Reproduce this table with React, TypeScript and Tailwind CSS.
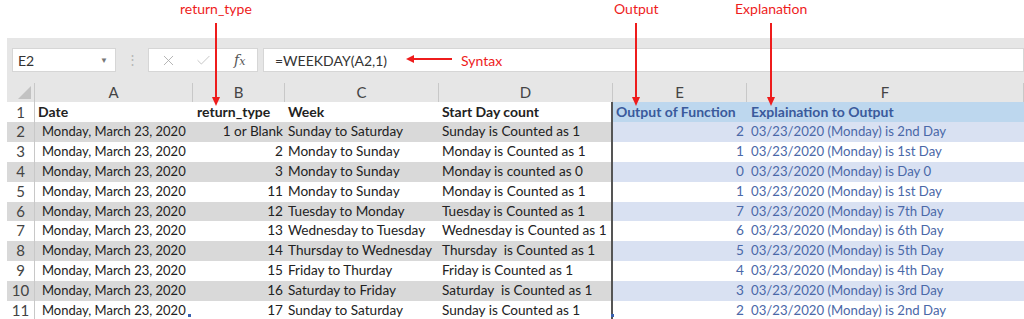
import { X, Check } from "lucide-react";

type Row = {
  n: number;
  b: string;
  c: string;
  d: string;
  e: string;
  f: string;
};

const rows: Row[] = [
  { n: 2, b: "1 or Blank", c: "Sunday to Saturday", d: "Sunday is Counted as 1", e: "2", f: "03/23/2020 (Monday) is 2nd Day" },
  { n: 3, b: "2", c: "Monday to Sunday", d: "Monday is Counted as 1", e: "1", f: "03/23/2020 (Monday) is 1st Day" },
  { n: 4, b: "3", c: "Monday to Sunday", d: "Monday is counted as 0", e: "0", f: "03/23/2020 (Monday) is Day 0" },
  { n: 5, b: "11", c: "Monday to Sunday", d: "Monday is Counted as 1", e: "1", f: "03/23/2020 (Monday) is 1st Day" },
  { n: 6, b: "12", c: "Tuesday to Monday", d: "Tuesday is Counted as 1", e: "7", f: "03/23/2020 (Monday) is 7th Day" },
  { n: 7, b: "13", c: "Wednesday to Tuesday", d: "Wednesday is Counted as 1", e: "6", f: "03/23/2020 (Monday) is 6th Day" },
  { n: 8, b: "14", c: "Thursday to Wednesday", d: "Thursday  is Counted as 1", e: "5", f: "03/23/2020 (Monday) is 5th Day" },
  { n: 9, b: "15", c: "Friday to Thurday", d: "Friday is Counted as 1", e: "4", f: "03/23/2020 (Monday) is 4th Day" },
  { n: 10, b: "16", c: "Saturday to Friday", d: "Saturday  is Counted as 1", e: "3", f: "03/23/2020 (Monday) is 3rd Day" },
  { n: 11, b: "17", c: "Sunday to Saturday", d: "Sunday is Counted as 1", e: "2", f: "03/23/2020 (Monday) is 2nd Day" },
];

const cols = "grid grid-cols-[28px_158px_92px_154px_174px_134px_1fr]";

function DownArrow({ x }: { x: number }) {
  return (
    <svg
      className="absolute top-[23px]"
      style={{ left: x - 5 }}
      width="10"
      height="84"
      viewBox="0 0 10 84"
    >
      <line x1="5" y1="0" x2="5" y2="76" stroke="#ee1c1c" strokeWidth="2" />
      <polygon points="1,74 9,74 5,83" fill="#ee1c1c" />
    </svg>
  );
}

export default function App() {
  return (
    <div className="relative w-[1024px] h-[319px] overflow-hidden bg-white font-['Lato',sans-serif] text-[14px] text-[#222]">
      <div className="h-[38px]" />

      {/* ribbon / formula bar */}
      <div className="ml-[7px] bg-[#e6e6e6] pt-[10px]">
        <div className="flex items-center h-[24px]">
          <div className="ml-[5px] w-[104px] h-[24px] bg-white border border-[#d6d6d6] flex items-center justify-between pl-[5px] pr-[7px] text-[#333]">
            <span>E2</span>
            <span className="text-[8px] text-[#777]">▼</span>
          </div>
          <div className="w-[32px] flex justify-center text-[#b5b5b5] text-[13px]">⋮</div>
          <div className="w-[110px] h-[24px] bg-white border border-[#d6d6d6] flex items-center">
            <X size={17} strokeWidth={1.2} className="ml-[11px] text-[#a9a9a9]" />
            <Check size={17} strokeWidth={1.2} className="ml-[18px] text-[#bdbdbd]" />
            <span className="ml-[22px] font-['DejaVu_Serif',serif] italic text-[#555] text-[14px]">
              f<span className="text-[11px]">x</span>
            </span>
          </div>
          <div className="ml-[5px] flex-1 h-[24px] bg-white border border-[#d6d6d6] flex items-center pl-[11px] text-[#333]">
            =WEEKDAY(A2,1)
          </div>
        </div>
        <div className="h-[11px]" />
        {/* column letters */}
        <div className={`${cols} h-[19px] text-[#444] text-[15px] leading-[19px]`}>
          <div className="relative border-r border-[#c8c8c8]">
            <svg className="absolute right-[3px] bottom-[3px]" width="13" height="13" viewBox="0 0 13 13">
              <polygon points="13,0 13,13 0,13" fill="#c2c2c2" />
            </svg>
          </div>
          {["A", "B", "C", "D", "E", "F"].map((l) => (
            <div key={l} className="text-center border-r border-[#c8c8c8]">
              {l}
            </div>
          ))}
        </div>
      </div>

      {/* sheet */}
      <div className="ml-[7px]">
        <div className={`${cols} h-[20px] leading-[20px] font-bold`}>
          <div className="text-center font-normal text-[15px] text-[#444] border-r border-[#c8c8c8]">1</div>
          <div className="pl-[3px] border-b-2 border-[#333]">Date</div>
          <div className="pl-[4px] border-b-2 border-[#333]">return_type</div>
          <div className="pl-[3px] border-b-2 border-[#333]">Week</div>
          <div className="pl-[3px] border-b-2 border-[#333] border-r-2 border-r-[#555]">Start Day count</div>
          <div className="pl-[3px] bg-[#bdd7ee] text-[#3a5a9c] border-b border-[#a9c6e4]">Output of Function</div>
          <div className="pl-[4px] bg-[#bdd7ee] text-[#3a5a9c] border-b border-[#a9c6e4]">Explaination to Output</div>
        </div>
        {rows.map((r) => {
          const band = r.n % 2 === 0;
          return (
            <div key={r.n} className={`${cols} h-[19.9px] leading-[19.9px] whitespace-pre text-[13.6px]`}>
              <div className={`text-center text-[15px] text-[#444] border-r border-[#c8c8c8] ${band ? "bg-[#d9d9d9]" : ""}`}>
                {r.n}
              </div>
              <div className={`pl-[7px] text-[13px] ${band ? "bg-[#d9d9d9]" : ""}`}>Monday, March 23, 2020</div>
              <div className={`pr-[2px] text-right ${band ? "bg-[#d9d9d9]" : ""}`}>{r.b}</div>
              <div className={`pl-[3px] ${band ? "bg-[#d9d9d9]" : ""}`}>{r.c}</div>
              <div className={`pl-[3px] border-r-2 border-[#555] ${band ? "bg-[#d9d9d9]" : ""}`}>{r.d}</div>
              <div className={`pr-[3px] text-right text-[#4a68a8] ${band ? "bg-[#d9e1f2]" : ""}`}>{r.e}</div>
              <div className={`pl-[4px] text-[13.2px] text-[#4a68a8] ${band ? "bg-[#d9e1f2]" : ""}`}>{r.f}</div>
            </div>
          );
        })}
      </div>

      {/* fill handle marks */}
      <div className="absolute left-[188px] top-[314px] w-[3px] h-[3px] bg-[#3a62b0]" />
      <div className="absolute left-[611px] top-[314px] w-[3px] h-[3px] bg-[#3a62b0]" />

      {/* red annotations */}
      <div className="absolute left-[180px] top-[-2px] text-[#ee1c1c] text-[14px]">return_type</div>
      <div className="absolute left-[614px] top-[-2px] text-[#ee1c1c] text-[14px]">Output</div>
      <div className="absolute left-[735px] top-[-2px] text-[#ee1c1c] text-[14px]">Explanation</div>
      <div className="absolute left-[461px] top-[50px] text-[#ee1c1c] text-[14px]">Syntax</div>
      <DownArrow x={216} />
      <DownArrow x={636} />
      <DownArrow x={771} />
      <svg className="absolute left-[406px] top-[54px]" width="48" height="10" viewBox="0 0 48 10">
        <line x1="6" y1="5" x2="46" y2="5" stroke="#ee1c1c" strokeWidth="2" />
        <polygon points="8,1 8,9 0,5" fill="#ee1c1c" />
      </svg>
    </div>
  );
}
